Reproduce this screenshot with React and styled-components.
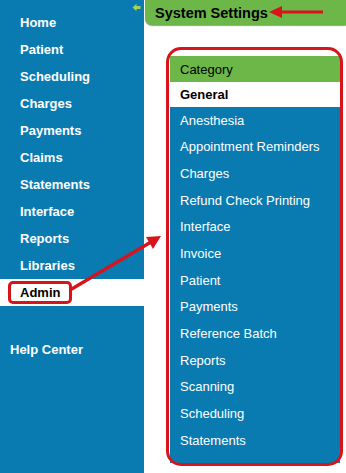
import React from "react";
import styled, { createGlobalStyle } from "styled-components";

const Global = createGlobalStyle`
  html, body { margin: 0; padding: 0; background: #ffffff; }
  body { font-family: "Liberation Sans", Arial, sans-serif; overflow: hidden; }
  * { box-sizing: border-box; }
`;

const BLUE = "#0a7bb1";
const GREEN = "#6cb748";
const RED = "#d7141c";

const Page = styled.div`
  position: relative;
  display: flex;
  width: 346px;
  height: 473px;
  overflow: hidden;
`;

const Sidebar = styled.nav`
  position: relative;
  width: 144px;
  flex: none;
  height: 100%;
  background: ${BLUE};
  padding-top: 8.5px;
  display: flex;
  flex-direction: column;
`;

const Collapse = styled.svg`
  position: absolute;
  top: 3px;
  right: 3px;
`;

const NavItem = styled.div`
  height: 27px;
  display: flex;
  align-items: center;
  padding-left: ${(p) => (p.$boxed ? "8px" : "20px")};
  background: ${(p) => (p.$active ? "#ffffff" : "transparent")};
  color: ${(p) => (p.$active ? "#000000" : "#ffffff")};
  font-weight: bold;
  font-size: 13px;
`;

const Boxed = styled.span`
  display: inline-flex;
  align-items: center;
  height: 23px;
  padding: 0 9px;
  border: 3px solid ${RED};
  border-radius: 5px;
`;

const HelpItem = styled.div`
  margin-top: 30px;
  height: 27px;
  display: flex;
  align-items: center;
  padding-left: 10px;
  color: #ffffff;
  font-weight: bold;
  font-size: 13px;
`;

const Main = styled.main`
  flex: 1;
  display: flex;
  flex-direction: column;
`;

const Header = styled.div`
  margin-left: 1px;
  height: 25px;
  background: ${GREEN};
  border-bottom-left-radius: 7px;
  box-shadow: 0 1px 1px #9a9a9a;
  display: flex;
  align-items: center;
  padding-left: 10px;
  font-size: 14.5px;
  font-weight: bold;
  color: #000000;
`;

const PanelWrap = styled.div`
  position: relative;
  margin: 31px 6px 0 26px;
`;

const Frame = styled.div`
  position: absolute;
  top: -9px;
  left: -4px;
  right: -3px;
  bottom: -3px;
  border: 3.5px solid ${RED};
  border-radius: 15px;
  pointer-events: none;
`;

const CategoryHead = styled.div`
  height: 26px;
  background: ${GREEN};
  display: flex;
  align-items: center;
  padding-left: 10px;
  font-size: 13px;
  color: #000000;
`;

const SelectedRow = styled.div`
  height: 25px;
  background: #ffffff;
  display: flex;
  align-items: center;
  padding-left: 10px;
  font-size: 13px;
  font-weight: bold;
  color: #000000;
`;

const List = styled.div`
  background: ${BLUE};
  padding-bottom: 9px;
`;

const Row = styled.div`
  height: 26.67px;
  display: flex;
  align-items: center;
  padding-left: 10px;
  font-size: 13px;
  color: #ffffff;
`;

const Annot = styled.svg`
  position: absolute;
  left: 0;
  top: 0;
  pointer-events: none;
`;

const nav = ["Home", "Patient", "Scheduling", "Charges", "Payments", "Claims", "Statements", "Interface", "Reports", "Libraries"];
const cats = ["Anesthesia", "Appointment Reminders", "Charges", "Refund Check Printing", "Interface", "Invoice", "Patient", "Payments", "Reference Batch", "Reports", "Scanning", "Scheduling", "Statements"];

export default function App() {
  return (
    <>
      <Global />
      <Page>
        <Sidebar>
          <Collapse width="9" height="9" viewBox="0 0 9 9">
            <path d="M0.5 4.5 L4.5 0.8 L4.5 3 L8.5 3 L8.5 6 L4.5 6 L4.5 8.2 Z" fill="#9fd25a" />
          </Collapse>
          {nav.map((n) => (
            <NavItem key={n}>{n}</NavItem>
          ))}
          <NavItem $active $boxed>
            <Boxed>Admin</Boxed>
          </NavItem>
          <HelpItem>Help Center</HelpItem>
        </Sidebar>
        <Main>
          <Header>System Settings</Header>
          <PanelWrap>
            <CategoryHead>Category</CategoryHead>
            <SelectedRow>General</SelectedRow>
            <List>
              {cats.map((c, i) => (
                <Row key={i}>{c}</Row>
              ))}
            </List>
            <Frame />
          </PanelWrap>
        </Main>
        <Annot width="346" height="473" viewBox="0 0 346 473">
          <line x1="70" y1="290" x2="151" y2="242" stroke={RED} strokeWidth="3.2" />
          <polygon points="161,236 146,237 153,249" fill={RED} />
          <line x1="323" y1="12" x2="280" y2="12" stroke={RED} strokeWidth="3.2" />
          <polygon points="269,12 282,6 282,18" fill={RED} />
        </Annot>
      </Page>
    </>
  );
}
